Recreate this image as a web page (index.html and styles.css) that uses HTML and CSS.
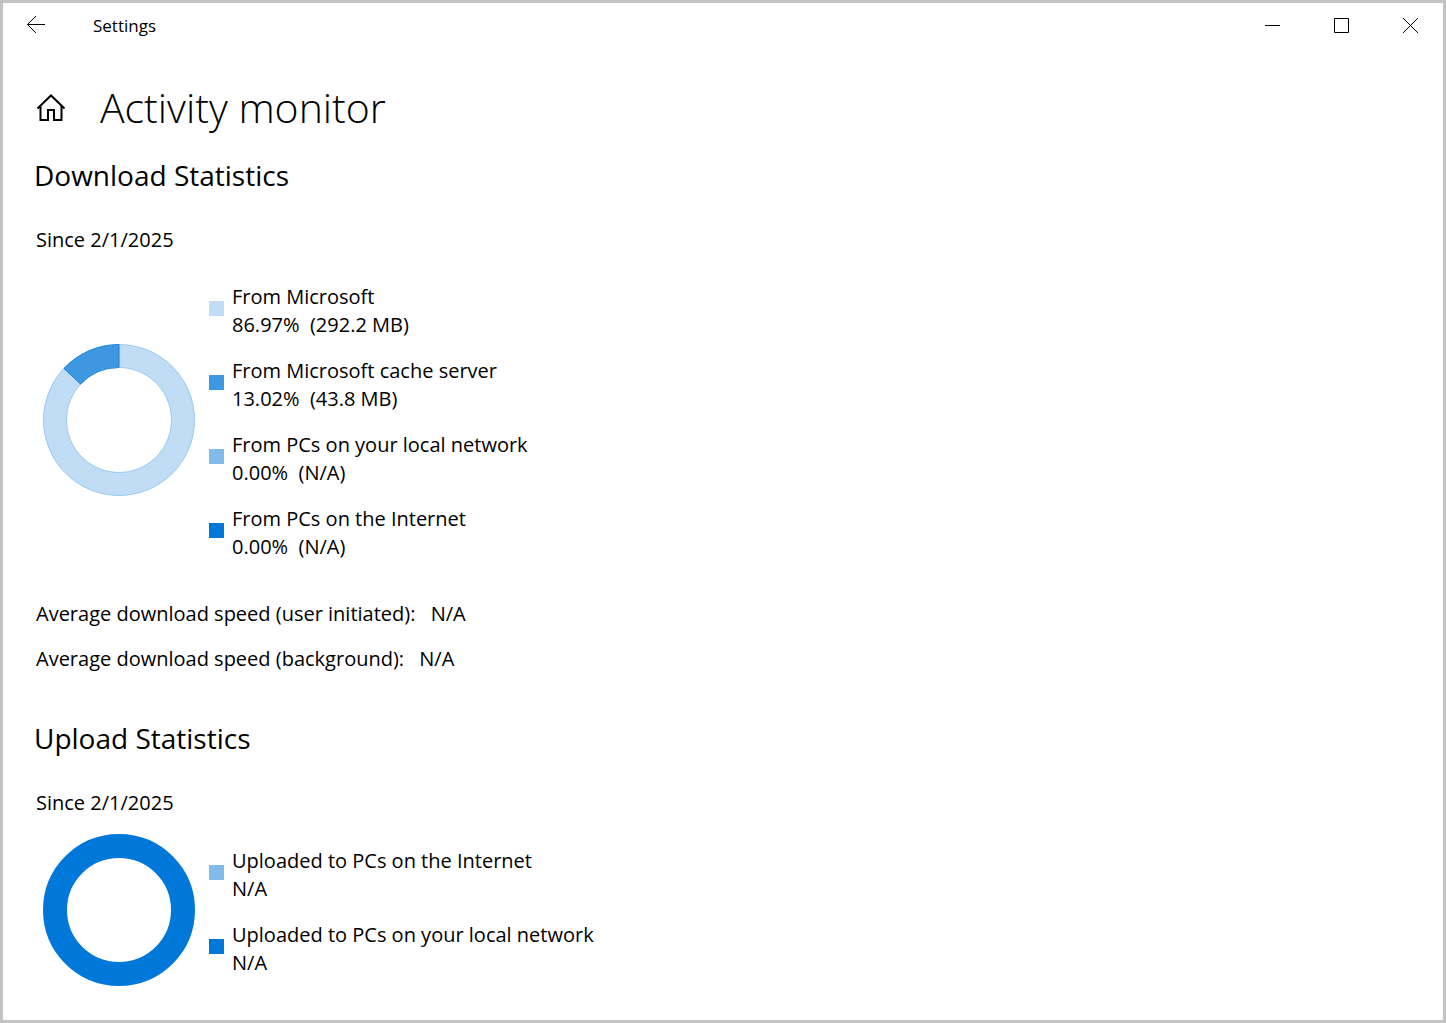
FILE: index.html
```
<!DOCTYPE html>
<html lang="en">
<head>
  <meta charset="UTF-8" />
  <meta name="viewport" content="width=device-width, initial-scale=1.0" />
  <title>Settings</title>
  <link rel="stylesheet" href="styles.css">
</head>
<body>
  <div class="window">
    <header class="titlebar">
      <button class="titlebar-button" aria-label="Back">
        <svg width="20" height="20" viewBox="0 0 20 20"><path d="M19 8.5H1.5M10 0L1.5 8.5L10 17" /></svg>
      </button>
      <span class="titlebar-title">Settings</span>
      <div class="titlebar-controls">
        <button class="titlebar-button" aria-label="Minimize">
          <svg width="16" height="16" viewBox="0 0 16 16"><path d="M1 7.5H16" /></svg>
        </button>
        <button class="titlebar-button" aria-label="Maximize">
          <svg width="16" height="16" viewBox="0 0 16 16"><path d="M1.5 .5H15.5V14.5H1.5Z" /></svg>
        </button>
        <button class="titlebar-button" aria-label="Close">
          <svg width="16" height="16" viewBox="0 0 16 16"><path d="M1 0L16 15M16 0L1 15" /></svg>
        </button>
      </div>
    </header>

    <main class="content">
      <div class="page-header">
        <button class="home-button" aria-label="Home">
          <svg width="30" height="30" viewBox="0 0 30 30"><path d="M1.5 16.5L15 3.5L28.5 16.5M4.5 14V28H12V18H18V28H25.5V14" /></svg>
        </button>
        <h1>Activity monitor</h1>
      </div>

      <section class="stats">
        <h2>Download Statistics</h2>
        <p>Since 2/1/2025</p>
        <div class="stats-row">
          <svg class="donut" width="152" height="152" viewBox="0 0 152 152" role="img" aria-label="Download sources">
            <path class="slice-microsoft" d="M76 .5A75.5 75.5 0 1 1 20.9 24.4L37.7 40.1A52.5 52.5 0 1 0 76 23.5Z" />
            <path class="slice-cache" d="M20.9 24.4A75.5 75.5 0 0 1 76 .5V23.5A52.5 52.5 0 0 0 37.7 40.1Z" />
          </svg>
          <ul class="legend">
            <li><span class="swatch microsoft"></span><div>From Microsoft<br>86.97%&nbsp; (292.2 MB)</div></li>
            <li><span class="swatch cache"></span><div>From Microsoft cache server<br>13.02%&nbsp; (43.8 MB)</div></li>
            <li><span class="swatch light"></span><div>From PCs on your local network<br>0.00%&nbsp; (N/A)</div></li>
            <li><span class="swatch dark"></span><div>From PCs on the Internet<br>0.00%&nbsp; (N/A)</div></li>
          </ul>
        </div>
        <div class="speeds">
          <p>Average download speed (user initiated): <span>N/A</span></p>
          <p>Average download speed (background): <span>N/A</span></p>
        </div>
      </section>

      <section class="stats">
        <h2>Upload Statistics</h2>
        <p>Since 2/1/2025</p>
        <div class="stats-row">
          <svg class="donut" width="152" height="152" viewBox="0 0 152 152" role="img" aria-label="Upload targets">
            <circle class="ring" cx="76" cy="76" r="64" />
          </svg>
          <ul class="legend">
            <li><span class="swatch light"></span><div>Uploaded to PCs on the Internet<br>N/A</div></li>
            <li><span class="swatch dark"></span><div>Uploaded to PCs on your local network<br>N/A</div></li>
          </ul>
        </div>
      </section>
    </main>
  </div>
</body>
</html>
```
FILE: styles.css
```
* {
  box-sizing: border-box;
}
body {
  margin: 0;
  font-family: "Segoe UI", "Open Sans", sans-serif;
  font-size: 20px;
  line-height: 28px;
  color: #000;
  background: #fff;
}
h1, h2, p, ul {
  margin: 0;
  padding: 0;
}
button {
  padding: 0;
  border: none;
  background: none;
}
svg {
  display: block;
  fill: none;
  stroke: #000;
}
.window {
  min-height: 100vh;
  border: 3px solid #c3c3c3;
}
.titlebar {
  display: flex;
  align-items: center;
  height: 46px;
}
.titlebar-button {
  display: flex;
  align-items: center;
  justify-content: center;
  width: 66px;
  height: 46px;
}
.titlebar-title {
  margin-left: 24px;
  font-size: 17px;
}
.titlebar-controls {
  display: flex;
  gap: 3px;
  margin-left: auto;
}
.content {
  padding: 30px 31px 24px;
}
.page-header {
  display: flex;
  align-items: center;
  gap: 34px;
  margin-bottom: 20px;
  padding-left: 2px;
}
.home-button svg {
  stroke-width: 2;
}
h1 {
  font-size: 41px;
  font-weight: 350;
  line-height: 56px;
}
h2 {
  margin-bottom: 31px;
  font-size: 28px;
  font-weight: 400;
  line-height: 40px;
}
.stats + .stats {
  margin-top: 45px;
}
.stats p {
  padding-left: 2px;
}
.stats-row {
  display: flex;
  align-items: center;
  gap: 14px;
  margin-top: 17px;
  padding-left: 9px;
}
.donut {
  flex-shrink: 0;
  margin-bottom: 4px;
}
.slice-microsoft {
  fill: #c0ddf5;
  stroke: #99c9f0;
}
.slice-cache {
  fill: #3e97e1;
  stroke: #1a84da;
}
.ring {
  stroke: #0078d9;
  stroke-width: 24;
}
.legend {
  display: flex;
  flex-direction: column;
  gap: 18px;
  padding: 12px 0;
  list-style: none;
}
.legend li {
  display: flex;
  gap: 8px;
}
.swatch {
  flex-shrink: 0;
  width: 15px;
  height: 15px;
  margin-top: 18px;
}
.microsoft {
  background: #c0ddf5;
}
.cache {
  background: #3e97e1;
}
.light {
  background: #80bbeb;
}
.dark {
  background: #0078d9;
}
.speeds {
  display: flex;
  flex-direction: column;
  gap: 17px;
  margin-top: 27px;
}
.speeds span {
  margin-left: 10px;
}
```
